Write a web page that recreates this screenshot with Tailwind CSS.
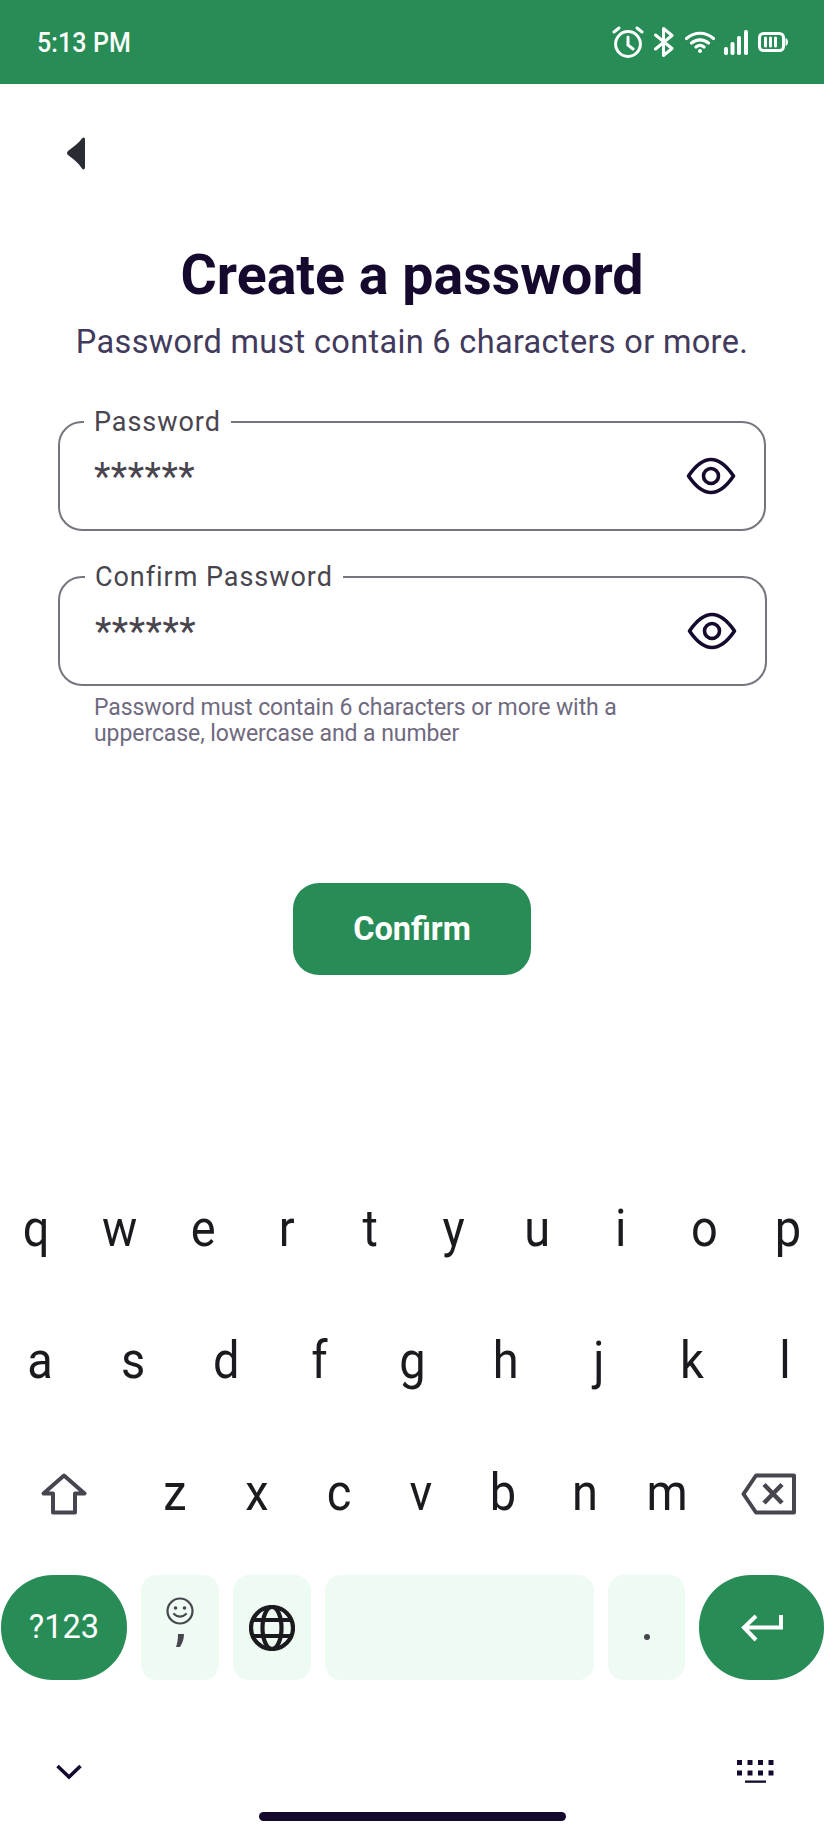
<!DOCTYPE html>
<html><head><meta charset="utf-8">
<script src="https://cdn.jsdelivr.net/npm/@tailwindcss/browser@4"></script>
</head>
<body class="bg-white">
<div class="w-[824px] h-[1832px] overflow-hidden flex flex-col font-['Roboto',sans-serif] bg-white">
  <!-- status bar -->
  <div class="h-[84px] shrink-0 bg-[#288c56] flex items-center justify-between pl-[37px] pr-[36px] text-white">
    <span class="inline-block scale-y-[1.12] text-[25px] font-medium leading-none tracking-[0.1px]">5:13 PM</span>
    <div class="flex items-center">
      <svg width="34" height="32" viewBox="0 0 34 32" fill="none" stroke="white" stroke-width="3" stroke-linecap="round"><circle cx="17" cy="18" r="12.400"/><path d="M17 11v8l5 4M3 6l5-4M31 6l-5-4"/></svg>
      <svg class="ml-[9px]" width="20" height="30" viewBox="0 0 20 30" fill="none" stroke="white" stroke-width="3" stroke-linejoin="round" stroke-linecap="round"><path d="M1.500 8 18 21.500 9.500 28.500V1.500L18 8.500 1.500 22"/></svg>
      <svg class="ml-[11px]" width="30" height="22" viewBox="0 0 30 22" fill="none" stroke="white" stroke-width="3.200" stroke-linecap="round"><path d="M1.500 7.500c8-7 19-7 27 0M6.500 12c5-4.300 12-4.300 17 0M11 16c2.500-2 5.500-2 8 0"/><circle cx="15" cy="20" r="2" fill="white" stroke="none"/></svg>
      <svg class="ml-[9px]" width="24" height="25" viewBox="0 0 24 25" fill="white"><rect x="0" y="17" width="4" height="8" rx="1.700"/><rect x="6.500" y="12" width="4" height="13" rx="1.700"/><rect x="13" y="6" width="4" height="19" rx="1.700"/><rect x="20" y="0" width="4" height="25" rx="1.700"/></svg>
      <svg class="ml-[10px]" width="30" height="20" viewBox="0 0 30 20" fill="none"><rect x="1.500" y="1.500" width="24" height="17" rx="4" stroke="white" stroke-width="3"/><path d="M7.500 6v8M12.500 6v8M17.500 6v8" stroke="white" stroke-width="3" stroke-linecap="round"/><path d="M27.500 6c1.500.5 2.500 2 2.500 4s-1 3.500-2.500 4z" fill="white"/></svg>
    </div>
  </div>

  <main class="flex-1 flex flex-col relative">
    <!-- back -->
    <div class="pl-[67px] pt-[53px] h-[116px]">
      <svg width="18" height="33" viewBox="0 0 18 33" fill="#2a2c33"><path d="M15 1.500c1-1.600 3-1 3 1v28c0 2-2 2.600-3 1-3-5-9-10-14-13.500-1.300-1-1.300-3 0-4C6 10 12 6 15 1.500z"/></svg>
    </div>
    <!-- heading -->
    <h1 class="text-center text-[55.500px] font-bold leading-[64px] text-[#150a2e] mt-[44px]">Create a password</h1>
    <p class="text-center text-[32.500px] leading-[40px] tracking-[0.33px] text-[#423a5c] mt-[14px]">Password must contain 6 characters or more.</p>

    <!-- field 1 -->
    <div class="relative ml-[58px] w-[708px] h-[110px] mt-[59px] border-2 border-[#79747e] rounded-[24px]">
      <span class="absolute left-[24px] -top-[17px] bg-white px-[10px] text-[27px] leading-[32px] tracking-[0.95px] text-[#49454f]">Password</span>
      <span class="absolute left-[34px] top-[34px] text-[38px] leading-[40px] text-[#49454f] tracking-[0.5px]">******</span>
      <svg class="absolute right-[28px] top-[34px]" width="50" height="38" viewBox="0 0 50 38" fill="none" stroke="#150a2e" stroke-width="3.600" stroke-linejoin="round"><path d="M2.500 19C10 8 17 2.500 25 2.500S40 8 47.500 19C40 30 33 35.500 25 35.500S10 30 2.500 19z"/><circle cx="25" cy="19" r="7.500"/></svg>
    </div>

    <!-- field 2 -->
    <div class="relative ml-[58px] w-[709px] h-[110px] mt-[45px] border-2 border-[#79747e] rounded-[24px]">
      <span class="absolute left-[25px] -top-[17px] bg-white px-[10px] text-[27px] leading-[32px] tracking-[0.95px] text-[#49454f]">Confirm Password</span>
      <span class="absolute left-[35px] top-[34px] text-[38px] leading-[40px] text-[#49454f] tracking-[0.5px]">******</span>
      <svg class="absolute right-[28px] top-[34px]" width="50" height="38" viewBox="0 0 50 38" fill="none" stroke="#150a2e" stroke-width="3.600" stroke-linejoin="round"><path d="M2.500 19C10 8 17 2.500 25 2.500S40 8 47.500 19C40 30 33 35.500 25 35.500S10 30 2.500 19z"/><circle cx="25" cy="19" r="7.500"/></svg>
    </div>
    <p class="ml-[94px] w-[560px] mt-[9px] text-[23px] leading-[26px] tracking-[-0.08px] text-[#6f6a80]">Password must contain 6 characters or more with a uppercase, lowercase and a number</p>

    <button class="self-center mt-[136px] w-[238px] h-[92px] rounded-[26px] bg-[#288c56] text-white text-[32.500px] font-bold">Confirm</button>
  </main>

  <!-- keyboard -->
  <section class="h-[668px] shrink-0 flex flex-col text-[#1b1b1f]">
    <div class="h-[132px] flex justify-between items-center text-[47px] scale-y-[1.09] origin-[50%_60%]">
      <span class="w-[72px] text-center">q</span><span class="w-[72px] text-center">w</span><span class="w-[72px] text-center">e</span><span class="w-[72px] text-center">r</span><span class="w-[72px] text-center">t</span><span class="w-[72px] text-center">y</span><span class="w-[72px] text-center">u</span><span class="w-[72px] text-center">i</span><span class="w-[72px] text-center">o</span><span class="w-[72px] text-center">p</span>
    </div>
    <div class="h-[132px] pl-[4px] pr-[3px] flex justify-between items-center text-[47px] scale-y-[1.09] origin-[50%_60%]">
      <span class="w-[72px] text-center">a</span><span class="w-[72px] text-center">s</span><span class="w-[72px] text-center">d</span><span class="w-[72px] text-center">f</span><span class="w-[72px] text-center">g</span><span class="w-[72px] text-center">h</span><span class="w-[72px] text-center">j</span><span class="w-[72px] text-center">k</span><span class="w-[72px] text-center">l</span>
    </div>
    <div class="h-[132px] flex items-center text-[47px]">
      <div class="w-[134px] flex justify-center pr-[6px]">
        <svg width="46" height="42" viewBox="0 0 46 42" fill="none" stroke="#49454f" stroke-width="4" stroke-linejoin="round"><path d="M23 2.500 43.500 20.500H34V39.500H12V20.500H2.500z"/></svg>
      </div>
      <div class="flex scale-y-[1.09] origin-[50%_80%]">
        <span class="w-[82px] text-center">z</span><span class="w-[82px] text-center">x</span><span class="w-[82px] text-center">c</span><span class="w-[82px] text-center">v</span><span class="w-[82px] text-center">b</span><span class="w-[82px] text-center">n</span><span class="w-[82px] text-center">m</span>
      </div>
      <svg class="ml-[33px]" width="56" height="42" viewBox="0 0 56 42" fill="none" stroke="#49454f" stroke-width="4" stroke-linejoin="round" stroke-linecap="round"><path d="M15 2.500H53V39.500H15L2.500 21z"/><path d="M23 11.500 41 30M41 11.500 23 30" stroke-linecap="butt" stroke-width="4.500"/></svg>
    </div>
    <div class="mt-[15px] h-[105px] flex pl-[1px]">
      <div class="w-[126px] h-full rounded-[52px] bg-[#288c56] text-white text-[32.500px] flex items-center justify-center">?123</div>
      <div class="ml-[14px] w-[78px] h-full rounded-[16px] bg-[#eefbf3] flex flex-col items-center pt-[22px]">
        <svg width="28" height="28" viewBox="0 0 28 28" fill="none" stroke="#49454f" stroke-width="2.200"><circle cx="14" cy="14" r="12.500"/><circle cx="9.500" cy="11" r="1.800" fill="#49454f" stroke="none"/><circle cx="18.500" cy="11" r="1.800" fill="#49454f" stroke="none"/><path d="M8 17c3.500 3.500 8.500 3.500 12 0" stroke-linecap="round"/></svg>
        <svg class="mt-[9px]" width="8" height="13" viewBox="0 0 8 13" fill="#49454f"><path d="M2 0h6C8 5 6.500 9 4 13H0c1.500-4 2-8 2-13z"/></svg>
      </div>
      <div class="ml-[14px] w-[78px] h-full rounded-[16px] bg-[#eefbf3] flex items-center justify-center">
        <svg width="46" height="46" viewBox="0 0 46 46" fill="none" stroke="#1b1b1f" stroke-width="4.200"><circle cx="23" cy="23" r="21"/><ellipse cx="23" cy="23" rx="9.500" ry="21"/><path d="M4 15h38M4 31h38"/></svg>
      </div>
      <div class="ml-[14px] w-[270px] h-full rounded-[16px] bg-[#eefbf3]"></div>
      <div class="ml-[14px] w-[77px] h-full rounded-[16px] bg-[#eefbf3] flex justify-center pt-[59px]"><span class="w-[6px] h-[6px] rounded-full bg-[#49454f]"></span></div>
      <div class="ml-[14px] w-[125px] h-full rounded-[52px] bg-[#288c56] flex items-center justify-center">
        <svg width="42" height="28" viewBox="0 0 42 28" fill="none" stroke="white" stroke-width="4"><path d="M40 1v12.500H3M15 2 3 13.500 15 26"/></svg>
      </div>
    </div>
    <div class="relative flex-1">
      <svg class="absolute left-[56px] top-[84px]" width="26" height="16" viewBox="0 0 26 16" fill="none" stroke="#150a2e" stroke-width="3.600"><path d="M1.500 2 13 13 24.500 2"/></svg>
      <svg class="absolute left-[737px] top-[80px]" width="37" height="23" viewBox="0 0 37 23" fill="#150a2e"><rect x="0" y="0" width="5" height="5"/><rect x="10.500" y="0" width="5" height="5"/><rect x="21" y="0" width="5" height="5"/><rect x="31.500" y="0" width="5" height="5"/><rect x="0" y="10.500" width="5" height="5"/><rect x="10.500" y="10.500" width="5" height="5"/><rect x="21" y="10.500" width="5" height="5"/><rect x="31.500" y="10.500" width="5" height="5"/><rect x="8" y="20.500" width="21" height="2.300"/></svg>
      <div class="absolute left-[259px] top-[132px] w-[307px] h-[9px] rounded-full bg-[#150a2e]"></div>
    </div>
  </section>
</div>
</body></html>
